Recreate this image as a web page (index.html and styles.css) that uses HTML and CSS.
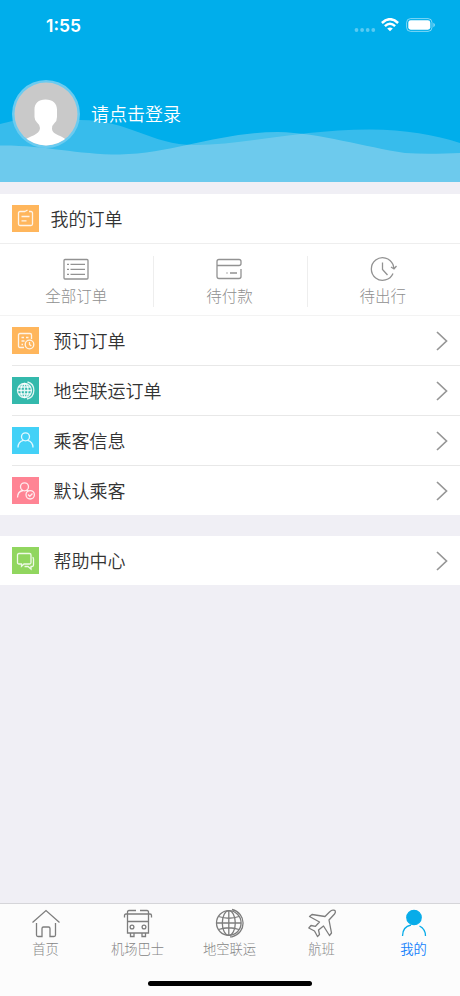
FILE: index.html
```html
<!DOCTYPE html>
<html lang="zh-CN">
<head>
<meta charset="utf-8">
<title>我的</title>
<link rel="stylesheet" href="styles.css">
</head>
<body>
<div class="app">
  <header class="header">
    <svg class="waves" viewBox="0 0 460 60" preserveAspectRatio="none">
      <path class="wave-back" d="M0 2C28-6 55-7 80-2C130-2 150 23 195 23C245 23 300 7.500 370 7.500C405 7.500 435 13 460 21V60H0Z"/>
      <path class="wave-front" d="M0 23.500C45 23 75 32.500 120 32.500C175 31 220 10 278 10C320 11 365 25 405 31C425 32.500 445 31.500 460 31V60H0Z"/>
    </svg>
    <div class="statusbar">
      <span class="time">1:55</span>
      <span class="indicators">
        <svg width="22" height="6" viewBox="0 0 22 6" fill="#fff" fill-opacity=".35"><circle cx="2.500" cy="3" r="1.900"/><circle cx="8.100" cy="3" r="1.900"/><circle cx="13.700" cy="3" r="1.900"/><circle cx="19.300" cy="3" r="1.900"/></svg>
        <svg class="wifi" width="18" height="14" viewBox="0 0 18 14" fill="none" stroke="#fff" stroke-width="2.500"><path d="M.9 5Q9-2.600 17.100 5M3.900 8.200Q9 3.400 14.100 8.200"/><path d="M9 13.300L6.200 10.600Q9 8.300 11.800 10.600Z" fill="#fff" stroke="none"/></svg>
        <svg width="30" height="14" viewBox="0 0 30 14"><rect x=".6" y=".6" width="25.400" height="12.800" rx="4" fill="none" stroke="#fff" stroke-opacity=".5"/><rect x="2.300" y="2.300" width="22" height="9.400" rx="2.400" fill="#fff"/><path d="M27.300 4.800Q29 5.500 29 7T27.300 9.200Z" fill="#fff" fill-opacity=".5"/></svg>
      </span>
    </div>
    <div class="profile">
      <svg class="avatar" viewBox="0 0 68 68">
        <defs><clipPath id="face"><circle cx="34" cy="34" r="31.500"/></clipPath></defs>
        <circle cx="34" cy="34" r="34" fill="#6bcbf0"/>
        <circle cx="34" cy="34" r="31.500" fill="#c9c9c9"/>
        <path clip-path="url(#face)" fill="#fff" d="M33.500 19.500C41 19.500 45.500 24 45 31V37Q45 41 42.500 43Q40 45 40 49C40 55 52 56 54 60V68H13V60C17 56 28 55 28 48Q28 45 25 42.500Q22.500 40 22.500 37V31C22 24 26 19.500 33.500 19.500Z"/>
      </svg>
      <span class="login">请点击登录</span>
    </div>
  </header>

  <main>
    <section class="orders">
      <div class="orders-title">
        <span class="badge orange"><svg viewBox="0 0 27 27"><path d="M13 6.500H8Q6.500 6.500 6.500 8V19Q6.500 20.500 8 20.500H19Q20.500 20.500 20.500 19V8Q20.500 6.500 19 6.500H17M13 6.500L15.500 5M9.500 11.500H17.500M9.500 15.800H14.500"/></svg></span>
        <span class="label">我的订单</span>
      </div>
      <div class="stats">
        <div class="stat"><svg viewBox="0 0 28 26"><rect x="2" y="3.500" width="24" height="19.500" rx="1"/><path d="M5 8.300H7M8.500 8.300H23M5 13.300H7M8.500 13.300H23M5 18.300H7M8.500 18.300H23"/></svg><span>全部订单</span></div>
        <div class="stat"><svg viewBox="0 0 28 26"><path d="M26 13V20.500Q26 22.500 24 22.500H4Q2 22.500 2 20.500V5.500Q2 3.500 4 3.500H24Q26 3.500 26 5.500V7.500Q26 9.500 24 9.500H2M11.500 17H12.500M15 17H22"/></svg><span>待付款</span></div>
        <div class="stat"><svg viewBox="0 0 28 26"><path d="M24 17.500A11.300 11.300 0 1 1 24 8.500L25 12.500M22 11L25 13L27.500 10M13.500 6.500V13.500L18.500 19"/></svg><span>待出行</span></div>
      </div>
    </section>

    <section class="list">
      <div class="row">
        <span class="badge orange"><svg viewBox="0 0 27 27"><path d="M12 20.500H8Q6.500 20.500 6.500 19V8Q6.500 6.500 8 6.500H18Q19.500 6.500 19.500 8V12M9.500 10.500H12M14 10.500H16.500M9.500 14H12.500M9.500 17.500H11"/><circle cx="17.500" cy="17.500" r="4.300"/><path d="M17.500 15V17.500L19.300 19"/></svg></span>
        <div class="row-body"><span class="label">预订订单</span><svg class="chevron" viewBox="0 0 12 20"><path d="M1 1L10.500 10L1 19"/></svg></div>
      </div>
      <div class="row">
        <span class="badge teal"><svg viewBox="0 0 27 27"><circle cx="12.500" cy="13.500" r="7"/><ellipse cx="12.500" cy="13.500" rx="3.500" ry="7"/><path d="M12.500 6.500V20.500M5.500 13.500H19.500M6.500 10H18.500M6.500 17H18.500M15.500 5C24 7 24 20 15 22"/></svg></span>
        <div class="row-body"><span class="label">地空联运订单</span><svg class="chevron" viewBox="0 0 12 20"><path d="M1 1L10.500 10L1 19"/></svg></div>
      </div>
      <div class="row">
        <span class="badge cyan"><svg viewBox="0 0 27 27"><circle cx="13.500" cy="9.800" r="4"/><path d="M6 20.500C6 16.500 8.500 14 11.500 13.300M15.500 13.300C18.500 14 21 16.500 21 20.500"/></svg></span>
        <div class="row-body"><span class="label">乘客信息</span><svg class="chevron" viewBox="0 0 12 20"><path d="M1 1L10.500 10L1 19"/></svg></div>
      </div>
      <div class="row">
        <span class="badge pink"><svg viewBox="0 0 27 27"><circle cx="12.500" cy="9.800" r="4"/><path d="M5.500 20.500C5.500 16.500 8 14 11 13.500M14.500 13.300L16.500 14"/><circle cx="18.200" cy="17.800" r="4.200"/><path d="M16 17.500L17.800 19.300L20.500 16.500"/></svg></span>
        <div class="row-body"><span class="label">默认乘客</span><svg class="chevron" viewBox="0 0 12 20"><path d="M1 1L10.500 10L1 19"/></svg></div>
      </div>
    </section>

    <section class="list help">
      <div class="row">
        <span class="badge green"><svg viewBox="0 0 27 27"><path d="M7 6.500H17.500Q19 6.500 19 8V15.500Q19 17 17.500 17H12L9.500 19.200V17H7Q5.500 17 5.500 15.500V8Q5.500 6.500 7 6.500ZM20.500 10.500Q21.500 10.500 21.500 12V18Q21.500 19.500 20 19.500H19V22L16 19.500H12.500"/></svg></span>
        <div class="row-body"><span class="label">帮助中心</span><svg class="chevron" viewBox="0 0 12 20"><path d="M1 1L10.500 10L1 19"/></svg></div>
      </div>
    </section>
  </main>

  <footer class="footer">
    <nav class="tabs">
      <a class="tab"><svg viewBox="0 0 30 30"><path d="M1.500 14.500L15 2.500L28.500 14.500M5.500 15V27Q5.500 28.500 7 28.500H11V20.500Q11 19 12.500 19H17.500Q19 19 19 20.500V28.500H23Q24.500 28.500 24.500 27V15"/></svg><span>首页</span></a>
      <a class="tab"><svg viewBox="0 0 30 30"><path d="M13 2.500H6Q4.500 2.500 4.500 4V25H25.500V4Q25.500 2.500 24 2.500H17M1.500 9.500V7.500Q1.500 6 3 6H27Q28.500 6 28.500 7.500V9.500M4.500 13.500H25.500M7.500 25V28.500H11V25M19 25V28.500H22.500V25"/><circle cx="9" cy="19" r="1.900"/><circle cx="21" cy="19" r="1.900"/></svg><span>机场巴士</span></a>
      <a class="tab"><svg viewBox="0 0 30 30"><circle cx="13.800" cy="15" r="12.300"/><ellipse cx="13.800" cy="15" rx="6.500" ry="12.300"/><path d="M13.800 2.700V27.300M1.500 15H26M3.500 8.500Q14 12 24 8.500M3.500 21.500Q14 18 24 21.500M17 1.500C31.500 5 32 25 17 28.800H15"/></svg><span>地空联运</span></a>
      <a class="tab"><svg viewBox="0 0 30 30"><path stroke-linejoin="round" d="M25.500 2.200C28.500 1.500 29.200 3.800 27.500 6L22 12L24.500 25L22.500 27.500L16.500 18L11.500 22L12.500 26.500L10.500 28.500L7.500 23L1.800 20L4 17.500L8.500 18.300L12.500 14L2.500 8.500L5 6.500L18 8.500L22.500 4Q24 2.500 25.500 2.200Z"/></svg><span>航班</span></a>
      <a class="tab active"><svg viewBox="0 0 30 30"><circle class="head" cx="15" cy="9.500" r="7.200"/><path d="M3.500 28C3.500 22 7 18 12 17M20.500 18C24.500 20 26.500 23.500 26.500 28"/></svg><span>我的</span></a>
    </nav>
    <div class="home-indicator"></div>
  </footer>
</div>
</body>
</html>
```

FILE: styles.css
```css
* { box-sizing: border-box; }
body {
  margin: 0;
  background: #f0eff5;
  color: #333;
  font-family: "Noto Sans CJK SC", sans-serif;
  font-size: 18px;
}
svg { display: block; flex: none; }
.app { height: 996px; display: flex; flex-direction: column; }
main { flex: 1; }

.header { position: relative; height: 182px; background: #00aeeb; color: #fff; }
.waves { position: absolute; left: 0; bottom: 0; width: 100%; height: 60px; overflow: visible; }
.wave-back { fill: #e6ebee; fill-opacity: .24; }
.wave-front { fill: #e6ebee; fill-opacity: .31; }
.statusbar {
  position: relative;
  height: 80px;
  padding: 15px 24px 0 46px;
  display: flex;
  justify-content: space-between;
  align-items: flex-start;
}
.time { font: 600 17.500px/22px Inter, sans-serif; }
.indicators { display: flex; align-items: center; height: 20px; }
.indicators svg:first-child { margin: 9px 5px 0 0; }
.wifi { margin-right: 7px; }
.profile { position: relative; display: flex; align-items: center; padding-left: 12px; }
.avatar { width: 68px; height: 68px; margin-right: 11px; }
.login { font-weight: 350; line-height: 26px; padding-bottom: 2px; }

.orders { margin-top: 12px; background: #fff; }
.orders-title {
  height: 50px;
  padding-left: 12px;
  display: flex;
  align-items: center;
  gap: 12px;
  border-bottom: 1px solid #eee;
}
.label { font-weight: 350; line-height: 26px; padding-bottom: 2px; margin-left: -.5px; }
.stats { height: 72px; display: grid; grid-template-columns: repeat(3, 1fr); padding: 12px 0 11px; border-bottom: 1px solid #f3f3f3; }
.stat {
  display: flex;
  flex-direction: column;
  align-items: center;
  color: #8f8f8f;
  font-size: 15.500px;
  font-weight: 300;
  line-height: 24px;
  padding-right: 1px;
}
.stat + .stat { border-left: 1px solid #eee; padding-right: 2px; }
.stat svg { width: 28px; height: 26px; margin-bottom: 1px; fill: none; stroke: #929292; stroke-width: 1.300; }

.badge { width: 27px; height: 27px; flex: none; }
.badge svg { width: 27px; height: 27px; fill: none; stroke: #fff; stroke-width: 1.300; stroke-opacity: .85; }
.orange { background: #ffb65c; }
.teal { background: #34b9ac; }
.cyan { background: #43d1f7; }
.pink { background: #ff8494; }
.green { background: #91d65f; }

.list { background: #fff; }
.help { margin-top: 21px; }
.row { height: 49px; padding-left: 12px; display: flex; align-items: center; gap: 15px; }
.row + .row { height: 50px; padding-top: 1px; background: linear-gradient(#e8e8e8, #e8e8e8) 12px 0 / 100% 1px no-repeat; }
.row-body { flex: 1; display: flex; align-items: center; justify-content: space-between; padding-right: 12px; }
.chevron { width: 12px; height: 20px; fill: none; stroke: #969696; stroke-width: 1.700; }

.footer { height: 93px; background: #fcfcfc; border-top: 1px solid #d5d5d9; }
.tabs { display: grid; grid-template-columns: repeat(5, 1fr); padding-top: 4px; height: 80px; }
.tab { display: flex; flex-direction: column; align-items: center; color: #868686; font-size: 13.300px; font-weight: 300; line-height: 20px; padding-right: 1px; }
.tab svg { width: 30px; height: 30px; margin-bottom: 1px; fill: none; stroke: #7d7d7d; stroke-width: 1.300; }
.tab.active { color: #1682fb; font-weight: 350; }
.tab.active svg { stroke: #08ace9; }
.tab .head { fill: #08ace9; }
.home-indicator { width: 164px; height: 5px; margin: -3px auto 0; border-radius: 3px; background: #000; }
```
